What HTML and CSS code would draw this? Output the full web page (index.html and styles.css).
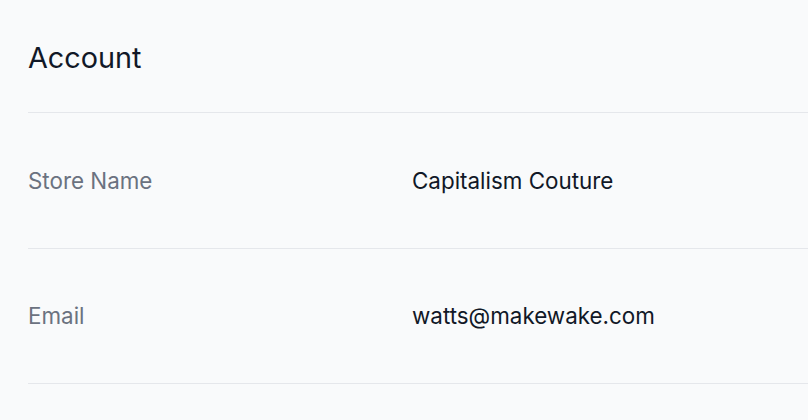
FILE: index.html
```html
<!DOCTYPE html>
<html>
<head>
<meta charset="utf-8">
<link rel="stylesheet" href="styles.css">
</head>
<body>
<main class="page">
  <h1 class="title">Account</h1>
  <dl class="list">
    <div class="row">
      <dt class="label">Store Name</dt>
      <dd class="value">Capitalism Couture</dd>
    </div>
    <div class="row">
      <dt class="label">Email</dt>
      <dd class="value">watts@makewake.com</dd>
    </div>
  </dl>
</main>
</body>
</html>
```
FILE: styles.css
```css
html, body {
  margin: 0;
  padding: 0;
  background: #f9fafb;
}
body {
  font-family: Inter, "Noto Sans", sans-serif;
  color: #111827;
}
.page {
  padding: 0 0 0 28px;
}
.title {
  margin: 0;
  font-size: 28.8px;
  font-weight: 400;
  line-height: 40px;
  padding: 38px 0 34px;
  border-bottom: 1px solid #e5e7eb;
}
.list {
  margin: 0;
}
.row {
  display: grid;
  grid-template-columns: 384px 1fr;
  align-items: center;
  height: 134.6px;
  border-bottom: 1px solid #e5e7eb;
}
.label {
  font-size: 22.4px;
  color: #6b7280;
}
.value {
  margin: 0;
  font-size: 22.4px;
  color: #111827;
}
```
